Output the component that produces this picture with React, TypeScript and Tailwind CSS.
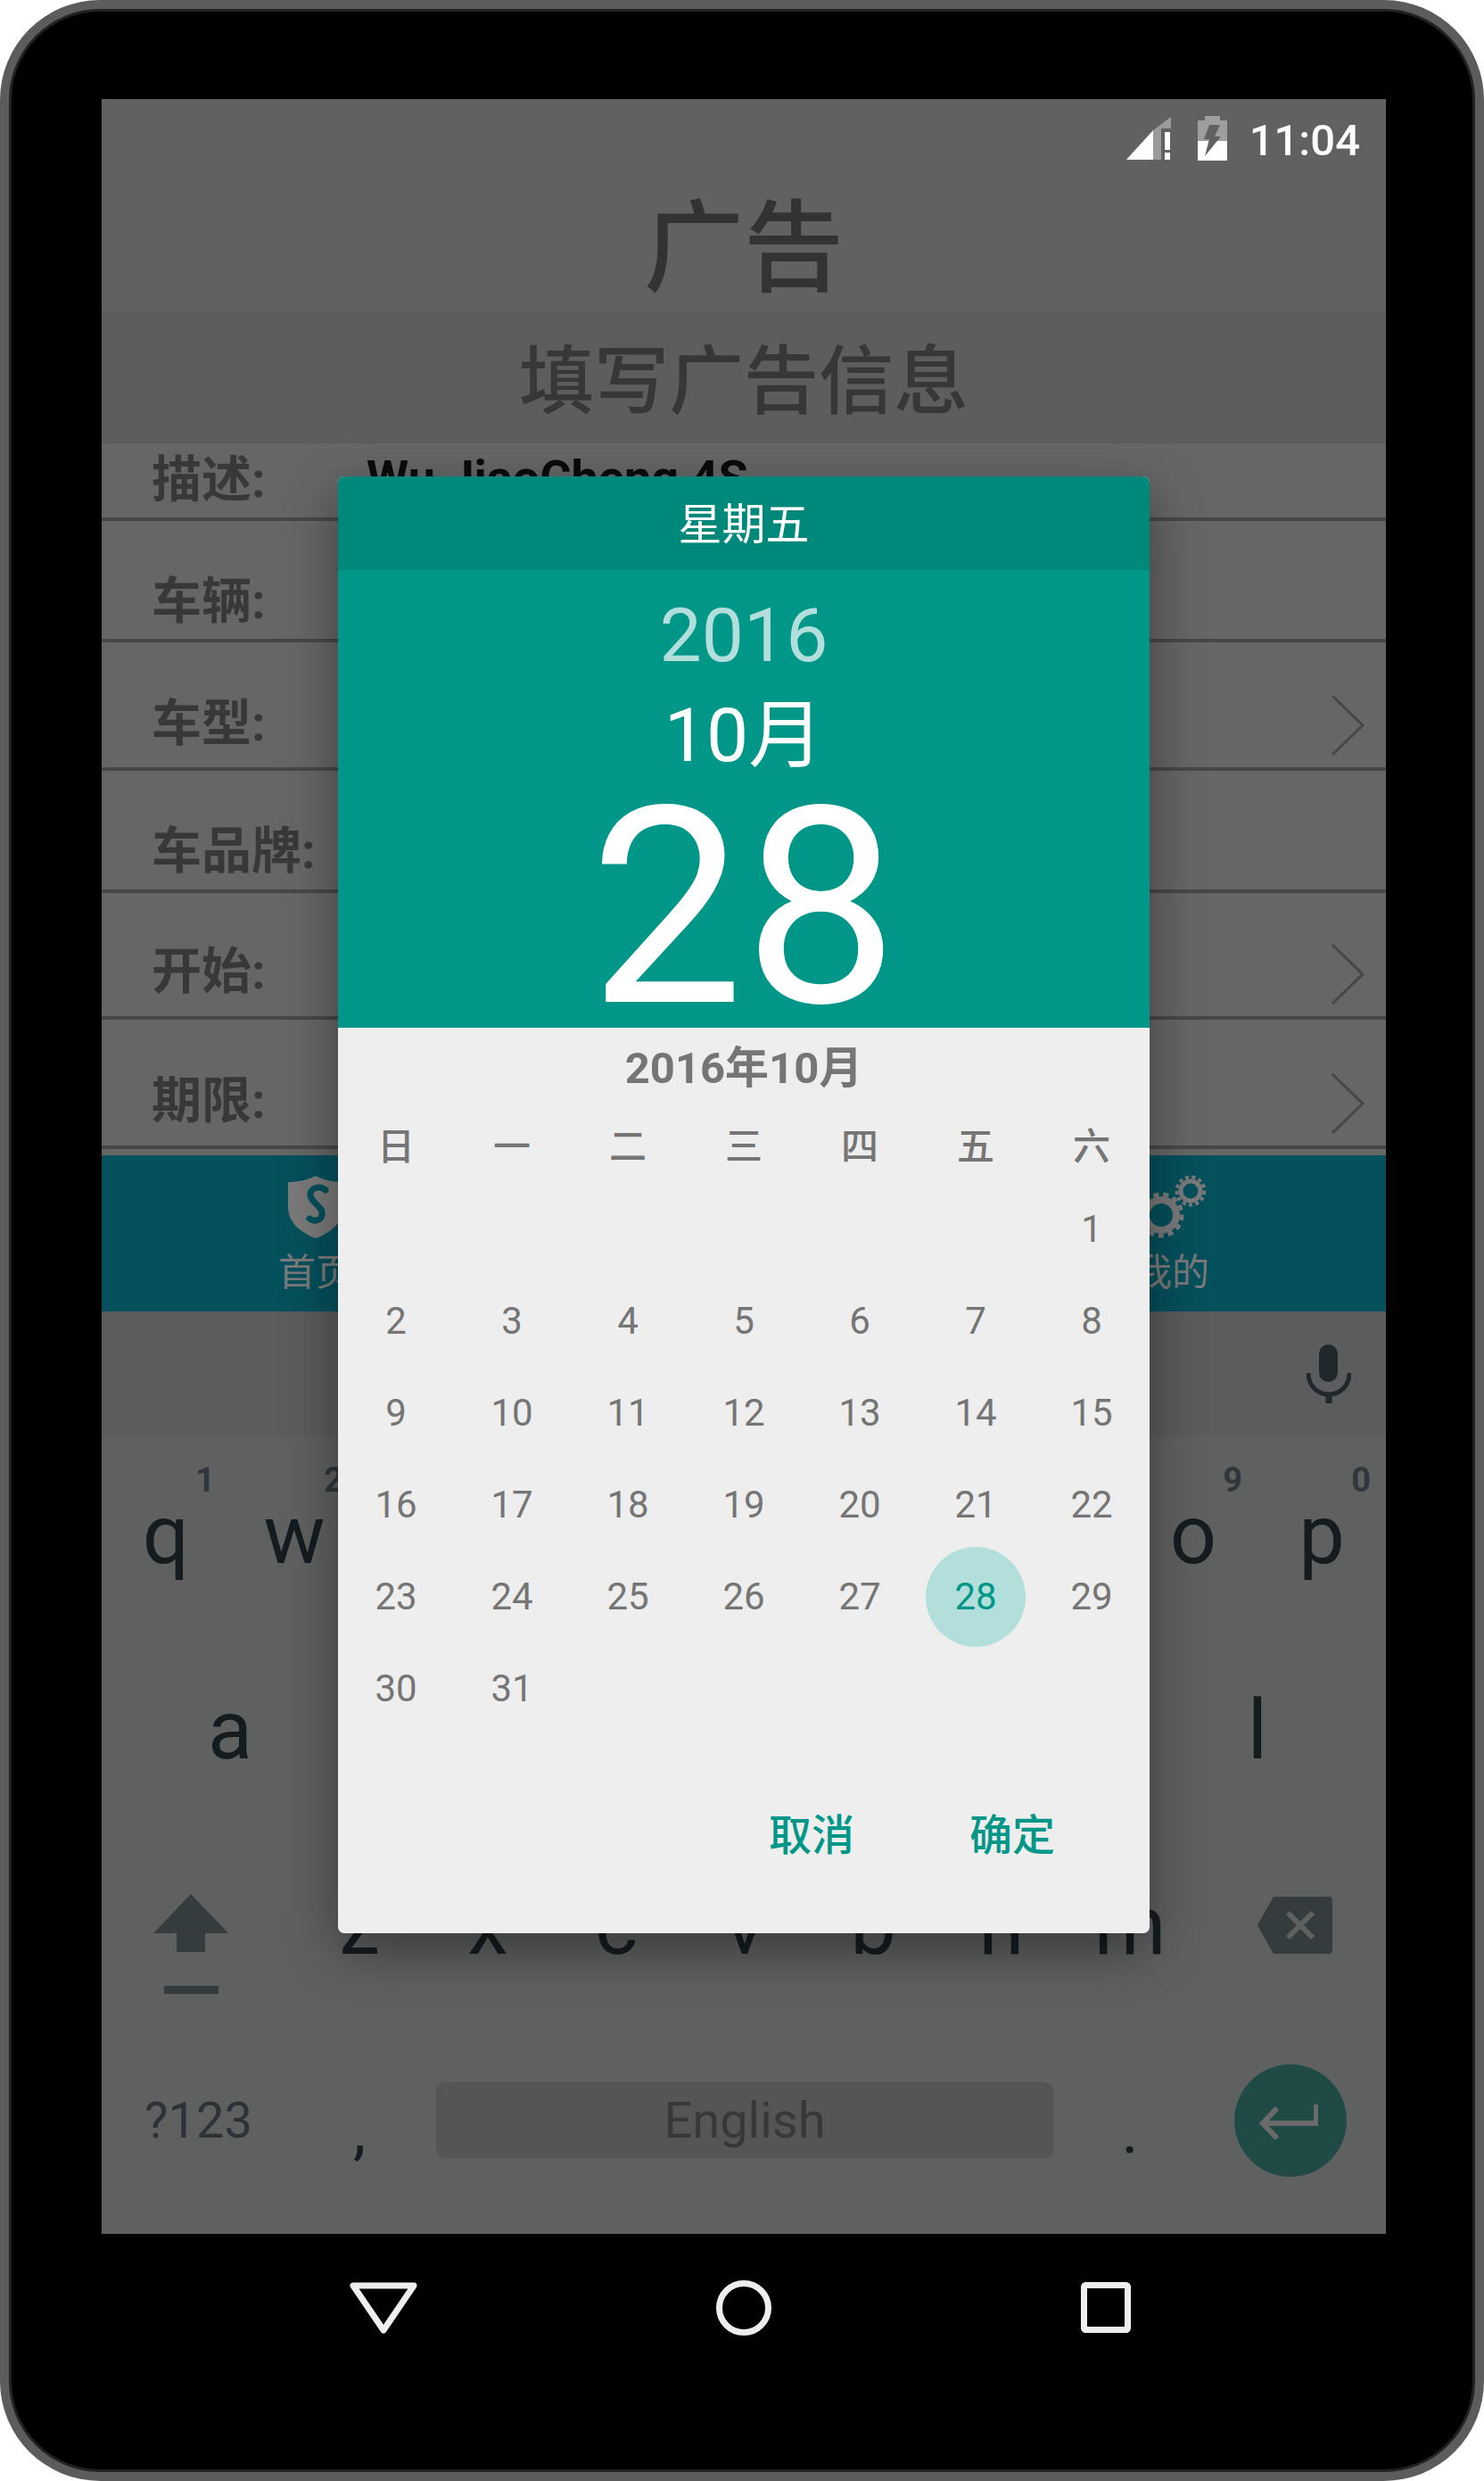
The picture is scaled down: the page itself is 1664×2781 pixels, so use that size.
import React from "react";

const rows = [
  { label: "描述:", h: "h-[87px]", pb: "pb-[9px]", value: "Wu JiaoCheng 4S", arrow: false },
  { label: "车辆:", h: "h-[136px]", pb: "pb-[9px]", arrow: false },
  { label: "车型:", h: "h-[144px]", pb: "pb-[16px]", arrow: true },
  { label: "车品牌:", h: "h-[137px]", pb: "pb-[10px]", arrow: false },
  { label: "开始:", h: "h-[142px]", pb: "pb-[17px]", arrow: true },
  { label: "期限:", h: "h-[145px]", pb: "pb-[17px]", arrow: true },
];

const calendar = [
  ["", "", "", "", "", "", "1"],
  ["2", "3", "4", "5", "6", "7", "8"],
  ["9", "10", "11", "12", "13", "14", "15"],
  ["16", "17", "18", "19", "20", "21", "22"],
  ["23", "24", "25", "26", "27", "28", "29"],
  ["30", "31", "", "", "", "", ""],
];

function Chevron() {
  return (
    <svg className="ml-auto mr-[24px] mb-[12px] w-[38px] h-[70px]" viewBox="0 0 38 70" fill="none">
      <path d="M2 2l34 33L2 68" stroke="#474747" strokeWidth="3" />
    </svg>
  );
}

function Key({ letter, hint }: { letter: string; hint?: string }) {
  return (
    <div className="relative h-[219px] flex items-center justify-center text-[92px] leading-none text-[#151c20]">
      {hint && (
        <span className="absolute top-[30px] right-[17px] text-[38px] leading-none font-bold text-[#30363a]">{hint}</span>
      )}
      <span className="pt-[2px]">{letter}</span>
    </div>
  );
}

export default function App() {
  return (
    <div className="w-[1664px] h-[2781px] bg-white font-[Roboto,'Noto_Sans_CJK_SC',sans-serif]">
      {/* Device frame */}
      <div className="w-full h-full rounded-[112px] bg-[#5c5c5c] p-[10px]">
        <div className="w-full h-full rounded-[102px] border-[3px] border-[#222222] bg-black pl-[101px] pt-[98px]">
          {/* Screen */}
          <div className="relative w-[1440px] h-[2393px] flex flex-col overflow-hidden bg-[#666666]">
            <div className="h-[238px] bg-[#616161]">
              {/* Status bar */}
              <div className="flex items-center justify-end h-[92px] pr-[29px]">
                <svg className="w-[50px] h-[48px] mb-[4px]" viewBox="0 0 50 48">
                  <path d="M0 48L30 15v33z" fill="#ffffff" />
                  <path d="M30 15L50 0v13H39v35h-9z" fill="#9a9a9a" />
                  <path d="M43 17h6v20h-6zM43 40h6v8h-6z" fill="#ffffff" />
                </svg>
                <svg className="w-[33px] h-[50px] ml-[30px] mb-[4px]" viewBox="0 0 33 50">
                  <path d="M8 0h17v5h8v23H0V5h8z" fill="#9e9e9e" />
                  <path d="M0 28h33v22H0z" fill="#ffffff" />
                  <path d="M13 10h12l-6 13h7L8 45l5-19H7z" fill="#616161" />
                </svg>
                <span className="ml-[25px] text-[49px] leading-none font-medium text-white">11:04</span>
              </div>
              <div className="text-center text-[112px] leading-[120px] font-medium text-[#333333] mt-[17px]">广告</div>
            </div>

            <div className="h-[148px] flex items-center justify-center pt-[12px] bg-[#5d5d5d] text-[84px] leading-none font-medium text-[#373737]">
              填写广告信息
            </div>

            {rows.map((r) => (
              <div key={r.label} className={`flex items-end border-b-4 border-[#474747] pl-[56px] ${r.h}`}>
                <span className={`w-[241px] text-[56px] leading-[66px] font-bold text-[#383838] ${r.pb}`}>{r.label}</span>
                {r.value && <span className="text-[54px] leading-[66px] font-bold text-[#0a0a0a] pb-[11px]">{r.value}</span>}
                {r.arrow && <Chevron />}
              </div>
            ))}

            {/* Bottom tabs */}
            <div className="mt-[7px] h-[175px] grid grid-cols-3 bg-[#04505c] text-[42px] text-[#7a7a7a]">
              <div className="flex flex-col items-center pt-[22px]">
                <svg className="w-[66px] h-[72px]" viewBox="0 0 66 72">
                  <path d="M33 1c10 5 20 7 31 7v28c0 16-12 28-31 35C14 64 2 52 2 36V8c11 0 21-2 31-7z" fill="#7a7a7a" />
                  <path d="M44 17c-7-6-18-2-17 6 1 9 15 12 13 22-1 6-8 8-14 4" fill="none" stroke="#04505c" strokeWidth="7" strokeLinecap="round" />
                </svg>
                <span className="leading-[50px] mt-[13px]">首页</span>
              </div>
              <div />
              <div className="flex flex-col items-center pt-[22px]">
                <svg className="w-[76px] h-[72px]" viewBox="0 0 76 72" fill="none" stroke="#7a7a7a">
                  <circle cx="26" cy="45" r="17" strokeWidth="8" />
                  <circle cx="26" cy="45" r="23" strokeWidth="5" strokeDasharray="6 5" />
                  <circle cx="59" cy="18" r="11" strokeWidth="5" />
                  <circle cx="59" cy="18" r="15.5" strokeWidth="4" strokeDasharray="4 3.4" />
                </svg>
                <span className="leading-[50px] mt-[13px]">我的</span>
              </div>
            </div>

            {/* Keyboard */}
            <div className="flex-1 bg-[#5f6161]">
              <div className="h-[140px] bg-[#5b5c5e] flex items-center justify-end pr-[39px]">
                <svg className="w-[50px] h-[66px]" viewBox="0 0 50 66" fill="none">
                  <rect x="14" y="0" width="21" height="42" rx="10.5" fill="#20282b" />
                  <path d="M2 32c0 14 10 24 23 24s23-10 23-24" stroke="#20282b" strokeWidth="5" />
                  <path d="M25 54v12" stroke="#20282b" strokeWidth="7" />
                </svg>
              </div>

              <div className="grid grid-cols-10">
                {["q", "w", "e", "r", "t", "y", "u", "i", "o", "p"].map((l, i) => (
                  <Key key={l} letter={l} hint={String((i + 1) % 10)} />
                ))}
              </div>
              <div className="grid grid-cols-9 px-[72px]">
                {["a", "s", "d", "f", "g", "h", "j", "k", "l"].map((l) => (
                  <Key key={l} letter={l} />
                ))}
              </div>
              <div className="flex h-[219px]">
                <div className="w-[217px] flex items-center justify-center pr-[18px] pt-[42px]">
                  <svg className="w-[84px] h-[112px]" viewBox="0 0 84 112" fill="#353c3e">
                    <path d="M42 0l42 44H58v21H26V44H0z" />
                    <path d="M12 103h61v9H12z" />
                  </svg>
                </div>
                {["z", "x", "c", "v", "b", "n", "m"].map((l) => (
                  <div key={l} className="w-[144px]">
                    <Key letter={l} />
                  </div>
                ))}
                <div className="flex-1 flex items-center justify-center pl-[10px]">
                  <svg className="w-[84px] h-[64px]" viewBox="0 0 84 64">
                    <path d="M18 0h62a4 4 0 014 4v56a4 4 0 01-4 4H18L0 32z" fill="#353c3e" />
                    <path d="M34 18l28 28M62 18L34 46" stroke="#5f6161" strokeWidth="6" />
                  </svg>
                </div>
              </div>
              <div className="flex h-[219px] items-center text-[56px] text-[#2c3235]">
                <div className="w-[217px] text-center">?123</div>
                <div className="w-[144px] text-center text-[72px] leading-none pt-[24px] text-[#151c20]">,</div>
                <div className="w-[720px] px-[14px]">
                  <div className="h-[85px] rounded-[10px] bg-[#545557] flex items-center justify-center text-[#36383a]">English</div>
                </div>
                <div className="w-[144px] text-center text-[72px] leading-none pt-[24px] text-[#151c20]">.</div>
                <div className="flex-1 flex justify-center">
                  <div className="w-[126px] h-[126px] rounded-full bg-[#1f4a46] flex items-center justify-center pr-[3px]">
                    <svg className="w-[66px] h-[42px]" viewBox="0 0 66 42" fill="none" stroke="#6a6a6a" strokeWidth="6">
                      <path d="M64 3v21H6M20 7L4 24l16 17" />
                    </svg>
                  </div>
                </div>
              </div>
            </div>

            {/* Date picker dialog */}
            <div className="absolute left-[265px] top-[423px] w-[910px] h-[1633px] flex flex-col rounded-[7px] overflow-hidden bg-[#eeeeee] text-[#757575] shadow-[0_20px_60px_rgba(0,0,0,0.4)]">
              <div className="h-[105px] flex items-center justify-center pt-[5px] bg-[#00897b] text-[49px] text-white">星期五</div>
              <div className="h-[513px] flex flex-col items-center bg-[#009688] text-white">
                <div className="text-[84px] leading-none text-[#b2dfdb] mt-[32px]">2016</div>
                <div className="text-[84px] leading-none mt-[28px]">10月</div>
                <div className="text-[308px] leading-none h-[285px] mt-[-3px]">28</div>
              </div>
              <div className="h-[92px] flex items-center justify-center text-[49px] font-bold">2016年10月</div>
              <div className="h-[82px] grid grid-cols-7 items-center text-center text-[42px] font-medium">
                {["日", "一", "二", "三", "四", "五", "六"].map((d) => (
                  <span key={d}>{d}</span>
                ))}
              </div>
              {calendar.map((week, i) => (
                <div key={i} className="h-[103px] grid grid-cols-7 grid-rows-[103px] text-[42px]">
                  {week.map((d, j) =>
                    d === "28" ? (
                      <div key={j} className="flex items-center justify-center">
                        <span className="w-[112px] h-[112px] shrink-0 rounded-full bg-[#b2dfdb] flex items-center justify-center text-[#009688]">{d}</span>
                      </div>
                    ) : (
                      <div key={j} className="flex items-center justify-center">{d}</div>
                    )
                  )}
                </div>
              ))}
              <div className="flex justify-end gap-[129px] pr-[106px] pt-[84px] text-[48px] leading-[60px] font-medium text-[#009688]">
                <span>取消</span>
                <span>确定</span>
              </div>
            </div>
          </div>

          {/* Navigation bar */}
          <div className="w-[1440px] h-[168px] flex items-start pt-[54px]">
            <svg className="ml-[278px] w-[76px] h-[58px]" viewBox="0 0 76 58" fill="none">
              <path d="M4 4h68L38 54z" stroke="#eeeeee" strokeWidth="7" strokeLinejoin="round" />
            </svg>
            <svg className="ml-[335px] w-[62px] h-[62px] mt-[-2px]" viewBox="0 0 62 62" fill="none">
              <circle cx="31" cy="31" r="27.5" stroke="#eeeeee" strokeWidth="7" />
            </svg>
            <svg className="ml-[347px] w-[56px] h-[57px]" viewBox="0 0 56 57" fill="none">
              <rect x="3.5" y="3.5" width="49" height="50" rx="2" stroke="#eeeeee" strokeWidth="7" />
            </svg>
          </div>
        </div>
      </div>
    </div>
  );
}
